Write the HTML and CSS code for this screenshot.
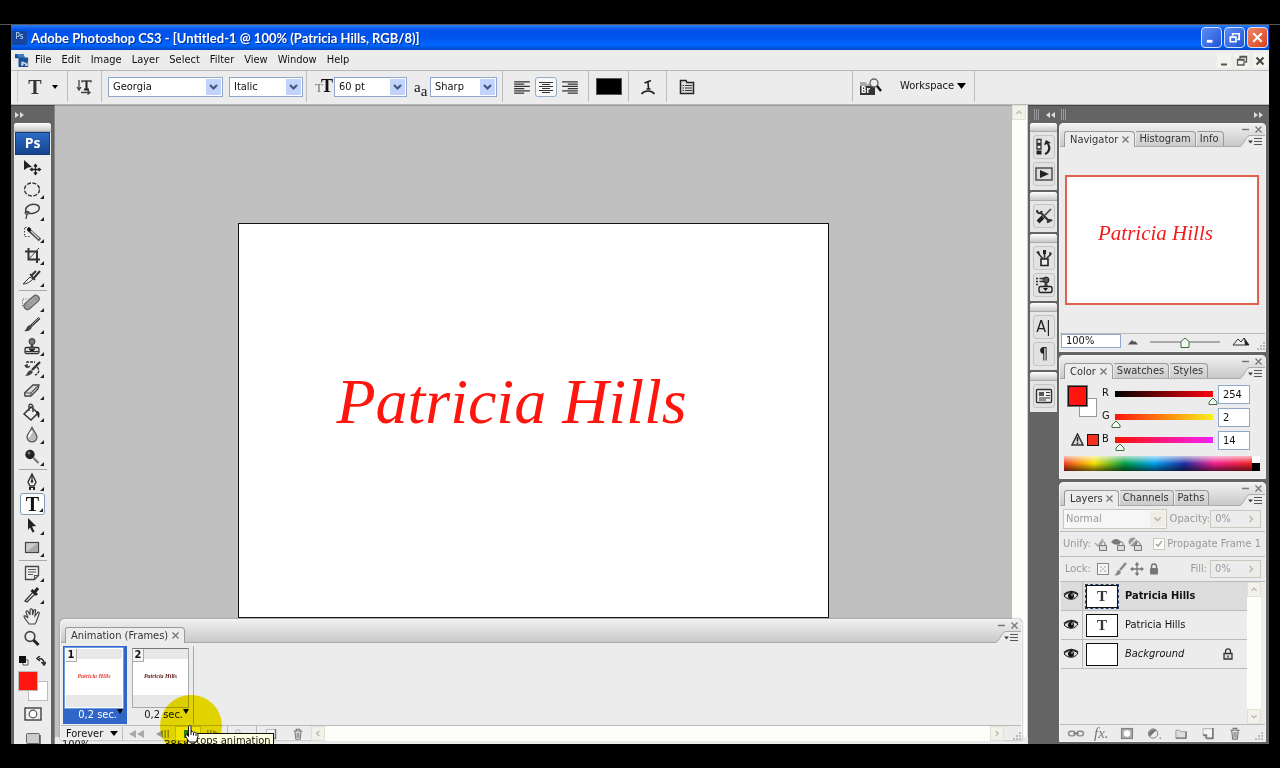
FILE: index.html
```html
<!DOCTYPE html>
<html lang="en">
<head>
    <title>Adobe Photoshop CS3</title>
    <meta charset="UTF-8">
    <link rel="stylesheet" href="styles.css">
</head>
<body>

<!-- shared icons -->
<svg class="sprite" aria-hidden="true">
    <symbol id="chevron" viewBox="0 0 14 16"><path d="M3.500 6l3.500 3.500L10.500 6" fill="none" stroke="#3d5684" stroke-width="2.200"/></symbol>
    <symbol id="minimize" viewBox="0 0 9 9"><path d="M1 4.500h7" stroke="#777" stroke-width="1.500"/></symbol>
    <symbol id="close" viewBox="0 0 9 9"><path d="M1.500 1.500l6 6M7.500 1.500l-6 6" stroke="#777" stroke-width="1.300"/></symbol>
    <symbol id="menu" viewBox="0 0 26 12"><path d="M0 12C5 12 6 1 11 .5h15V12z" fill="#ececec"/><path d="M0 11.500C5 11 6 1 11 .5h15" fill="none" stroke="#aaa"/><path d="M9 5.500h5l-2.500 3z" fill="#444"/><path d="M15 3.500h8M15 6.500h8M15 9.500h8" stroke="#555"/></symbol>
    <symbol id="eye" viewBox="0 0 16 12"><path d="M1 6c3-4 9-5 14-1-3 5-9 6-14 1z" fill="#ddd" stroke="#111"/><path d="M1 4.500C5 .5 11 .5 15 4" fill="none" stroke="#222" stroke-width="1.600"/><circle cx="8" cy="6" r="3" fill="#111"/><circle cx="9" cy="5" r=".8" fill="#fff"/></symbol>
    <symbol id="grip" viewBox="0 0 10 10"><path d="M8 1h2v2H8zM5 4h2v2H5zM8 4h2v2H8zM2 7h2v2H2zM5 7h2v2H5zM8 7h2v2H8z" fill="#bbb"/></symbol>
    <symbol id="trash" viewBox="0 0 12 14"><path d="M1 3.500h10M4 3V1.500h4V3M2.500 4l1 9h5l1-9M5 5.500v6M7 5.500v6" fill="none" stroke="#777" stroke-width="1.200"/></symbol>
    <symbol id="page" viewBox="0 0 12 12"><path d="M1.500 1.500h9v9h-6l-3-3z" fill="#f5f5f5" stroke="#bbb"/><path d="M10.500 1v9.500H4.500M1.500 7.500h3v3" fill="none" stroke="#777" stroke-width="1.500"/></symbol>
    <symbol id="up" viewBox="0 0 14 14"><path d="M4 8.500l3-3 3 3" fill="none" stroke="#bcbcb0" stroke-width="1.600"/></symbol>
    <symbol id="down" viewBox="0 0 14 14"><path d="M4 5.500l3 3 3-3" fill="none" stroke="#bcbcb0" stroke-width="1.600"/></symbol>
    <symbol id="left" viewBox="0 0 14 14"><path d="M8.500 4l-3 3 3 3" fill="none" stroke="#bcbcb0" stroke-width="1.600"/></symbol>
    <symbol id="right" viewBox="0 0 14 14"><path d="M5.500 4l3 3-3 3" fill="none" stroke="#bcbcb0" stroke-width="1.600"/></symbol>
    <symbol id="lock" viewBox="0 0 10 12"><path d="M2.500 6V3.500C2.500 0 7.500 0 7.500 3.500V6" fill="none" stroke="currentColor" stroke-width="1.500"/><rect x="1" y="5" width="8" height="6.500" rx="1" fill="currentColor"/></symbol>
</svg>

<div class="app">
    <header class="title-bar">
        <span class="app-icon">Ps</span>
        <h1>Adobe Photoshop CS3 - [Untitled-1 @ 100% (Patricia Hills, RGB/8)]</h1>
        <button class="win-btn" aria-label="Minimize"><svg viewBox="0 0 16 16"><path d="M3 12h6" stroke="#fff" stroke-width="3"/></svg></button>
        <button class="win-btn" aria-label="Restore"><svg viewBox="0 0 16 16"><path d="M6 6V4h7v6h-2" fill="none" stroke="#fff" stroke-width="1.800"/><path d="M3.500 7.500h6v5h-6z" fill="none" stroke="#fff" stroke-width="1.800"/></svg></button>
        <button class="win-btn win-close" aria-label="Close"><svg viewBox="0 0 16 16"><path d="M3.500 3.500l9 9M12.500 3.500l-9 9" stroke="#fff" stroke-width="2.200"/></svg></button>
    </header>

    <nav class="menu-bar">
        <span class="doc-icon"><svg viewBox="0 0 16 16"><path d="M0 1h10v4h5v11H4V6H0z" fill="#1c4f94"/><path d="M2 1h7l3 4H4z" fill="#3f7fc4"/></svg><b>Ps</b></span>
        <ul>
            <li><a href="#">File</a></li>
            <li><a href="#">Edit</a></li>
            <li><a href="#">Image</a></li>
            <li><a href="#">Layer</a></li>
            <li><a href="#">Select</a></li>
            <li><a href="#">Filter</a></li>
            <li><a href="#">View</a></li>
            <li><a href="#">Window</a></li>
            <li><a href="#">Help</a></li>
        </ul>
        <button class="doc-btn" aria-label="Minimize document"><svg viewBox="0 0 12 12"><path d="M3 9.500h6" stroke="#555" stroke-width="2"/></svg></button>
        <button class="doc-btn" aria-label="Restore document"><svg viewBox="0 0 12 12"><path d="M4 4V1.500h6.500V7H9M1.500 4.500H8V10H1.500zM1.500 5H8M4 2h6.500" fill="none" stroke="#555" stroke-width="1.300"/></svg></button>
        <button class="doc-btn" aria-label="Close document"><svg viewBox="0 0 12 12"><path d="M2.500 2.500l7 7M9.500 2.500l-7 7" stroke="#444" stroke-width="2"/></svg></button>
    </nav>

    <div class="options-bar">
        <div class="opt-cell opt-tool">
            <button class="icon-btn big-t" aria-label="Type tool">T</button>
            <svg class="tri" viewBox="0 0 6 4"><path d="M0 0h6L3 4z"/></svg>
        </div>
        <div class="opt-cell opt-orient">
            <button class="icon-btn" aria-label="Change text orientation"><svg viewBox="0 0 16 16"><path d="M3 1v9M1 8l2 3 2-3M6 3.500V2h9v1.500M5 13.500h8M11.500 11.500l2.500 2-2.500 2" fill="none" stroke="#444" stroke-width="1.300"/><path d="M10.500 2v8.500M8 10.500h5" stroke="#222" stroke-width="2"/></svg></button>
        </div>
        <div class="opt-cell opt-font">
            <div class="combo combo-family"><select aria-label="Font family"><option>Georgia</option></select><svg><use href="#chevron"/></svg></div>
            <div class="combo combo-style"><select aria-label="Font style"><option>Italic</option></select><svg><use href="#chevron"/></svg></div>
        </div>
        <div class="opt-cell opt-size">
            <span class="size-icon"><i>T</i><b>T</b></span>
            <div class="combo combo-size"><select aria-label="Font size"><option>60 pt</option></select><svg><use href="#chevron"/></svg></div>
            <span class="aa-icon">a<sub>a</sub></span>
            <div class="combo combo-aa"><select aria-label="Anti-aliasing"><option>Sharp</option></select><svg><use href="#chevron"/></svg></div>
        </div>
        <div class="opt-cell opt-align">
            <button class="icon-btn" aria-label="Left align"><svg viewBox="0 0 16 16"><path d="M1 2.500h14M1 4.500h9M1 6.500h14M1 8.500h9M1 10.500h14M1 12.500h9" stroke="#333"/></svg></button>
            <button class="icon-btn on" aria-label="Center"><svg viewBox="0 0 16 16"><path d="M1 2.500h14M4 4.500h8M1 6.500h14M4 8.500h8M1 10.500h14M4 12.500h8" stroke="#333"/></svg></button>
            <button class="icon-btn" aria-label="Right align"><svg viewBox="0 0 16 16"><path d="M1 2.500h14M6 4.500h9M1 6.500h14M6 8.500h9M1 10.500h14M6 12.500h9" stroke="#333"/></svg></button>
        </div>
        <div class="opt-cell opt-color"><button class="text-color" aria-label="Text color"></button></div>
        <div class="opt-cell opt-warp">
            <button class="icon-btn" aria-label="Warp text"><svg viewBox="0 0 16 16"><path d="M4.500 4L11 1.500M8 3l.5 7M6.500 10h4M1.500 15c3-4 10-4 13 0" fill="none" stroke="#222" stroke-width="1.600"/></svg></button>
        </div>
        <div class="opt-cell opt-palette">
            <button class="icon-btn" aria-label="Toggle palettes"><svg viewBox="0 0 16 16"><path d="M1.500 1.500H7l1 2h6.500v11h-13z" fill="#ddd" stroke="#222" stroke-width="1.500"/><path d="M3.500 6.500h1.500M6 6.500h7M3.500 9h1.500M6 9h7M3.500 11.500h1.500M6 11.500h7" stroke="#333"/></svg></button>
        </div>
        <div class="opt-cell opt-bridge">
            <span class="bridge"><svg viewBox="0 0 23 18"><path d="M1 4h6l1 2h8v4H1z" fill="#aaa"/><path d="M1 8h15v9H1z" fill="#333"/><circle cx="15" cy="5" r="4" fill="#eee" stroke="#666" stroke-width="1.400"/><path d="M18 8l4 5" stroke="#111" stroke-width="2.400"/></svg><b>Br</b></span>
            <button class="workspace-btn">Workspace <svg viewBox="0 0 9 6"><path d="M0 0h9L4.500 6z"/></svg></button>
        </div>
    </div>

    <div class="workspace">
        <aside class="toolbox">
            <svg class="dbl" viewBox="0 0 10 8"><path d="M0 1l4 3-4 3zM5 1l4 3-4 3z" fill="#ddd"/></svg>
            <div class="tool-panel">
                <div class="strip-head"></div>
                <div class="ps-logo">Ps</div>
                <div class="tools">
                    <button aria-label="Move"><svg viewBox="0 0 22 20"><path d="M3 2l8 7-4 .5L3 12z" fill="#222"/><path d="M14.500 7v9M10 11.500h9M13 8.500l1.500-2 1.500 2M13 14.500l1.500 2 1.500-2M11.500 10l-2 1.500 2 1.500M17.500 10l2 1.500-2 1.500" fill="none" stroke="#222" stroke-width="1.300"/></svg></button>
                    <button class="more" aria-label="Elliptical marquee"><svg viewBox="0 0 22 20"><ellipse cx="11" cy="9.500" rx="7.500" ry="6.500" fill="none" stroke="#333" stroke-width="1.400" stroke-dasharray="4 1.500"/></svg></button>
                    <button class="more" aria-label="Lasso"><svg viewBox="0 0 22 20"><ellipse cx="11.500" cy="7" rx="7" ry="4.500" transform="rotate(-12 11 7)" fill="none" stroke="#444" stroke-width="1.600"/><path d="M5 9c-2 2 0 4 2 3s0-4-2-2M6 12c0 2-1 3-1 5" fill="none" stroke="#444" stroke-width="1.300"/></svg></button>
                    <button class="more" aria-label="Quick selection"><svg viewBox="0 0 22 20"><path d="M4 3.500h6M3.500 4v8M4 12.500h5" stroke="#444" stroke-dasharray="1.500 1.500"/><path d="M8 6l11 10" stroke="#444" stroke-width="3.400"/><path d="M10 7l8 8" stroke="#ccc" stroke-width="1.400"/><circle cx="8" cy="5.500" r="2" fill="#111"/></svg></button>
                    <button class="more" aria-label="Crop"><svg viewBox="0 0 22 20"><path d="M4 5.500h12V17M7.500 2v11.500H19" fill="none" stroke="#333" stroke-width="2"/><path d="M7 14L18 2" stroke="#444"/></svg></button>
                    <button class="more" aria-label="Slice"><svg viewBox="0 0 22 20"><path d="M2 16l7-7 3 2c-3 3-6 5-10 5z" fill="#eee" stroke="#333"/><path d="M10 8l5-5M12 11l7-8" stroke="#333" stroke-width="2"/><path d="M9 6l5 6" stroke="#333" stroke-width="1.500"/></svg></button>
                    <hr>
                    <button class="more" aria-label="Healing brush"><svg viewBox="0 0 22 20"><rect x="1.500" y="5.500" width="18" height="7" rx="3.500" transform="rotate(-42 11 9)" fill="#999" stroke="#555"/><path d="M9 7l5 5M7 9l5 5M11 6l4 4" stroke="#ccc" stroke-dasharray="1 1.500"/><path d="M1.500 13V6h6" fill="none" stroke="#555" stroke-dasharray="1 1.500"/></svg></button>
                    <button class="more" aria-label="Brush"><svg viewBox="0 0 22 20"><path d="M18.500 3L10 11" stroke="#333" stroke-width="2.600"/><path d="M18 3l-7 7" stroke="#bbb" stroke-width=".8"/><path d="M3 16c3-1 2-5 6-6l2 2c-1 3-4 5-8 4z" fill="#444"/></svg></button>
                    <button class="more" aria-label="Clone stamp"><svg viewBox="0 0 22 20"><circle cx="11" cy="4.500" r="3" fill="#777" stroke="#333"/><path d="M11 7v5" stroke="#444" stroke-width="2.500"/><rect x="4" y="10.500" width="14" height="6" rx="1.500" fill="#ddd" stroke="#333" stroke-width="1.300"/><path d="M8 12h6l-3 3zM4 14.500h14" fill="#222" stroke="#333"/></svg></button>
                    <button class="more" aria-label="History brush"><svg viewBox="0 0 22 20"><path d="M19 3l-8 8" stroke="#333" stroke-width="2.400"/><path d="M4 17c2-1 2-5 6-6l2 2c-2 3-5 4-8 4z" fill="#444"/><path d="M6 8V3h8M4 6l2 3 3-2M16 8c3 3 2 7-2 8" fill="none" stroke="#333" stroke-width="1.400" stroke-dasharray="3 1"/></svg></button>
                    <button class="more" aria-label="Eraser"><svg viewBox="0 0 22 20"><path d="M3.500 12L12 4h6l-1 4-7 7H4z" fill="#ddd" stroke="#444" stroke-width="1.300"/><path d="M4 12h6l8-8M10 12v3" fill="none" stroke="#555" stroke-width="1.200"/></svg></button>
                    <button class="more" aria-label="Paint bucket"><svg viewBox="0 0 22 20"><path d="M3 11l7-7 7 6-7 7z" fill="#eee" stroke="#333" stroke-width="1.500"/><path d="M8 8V3c0-3 4-2 4 1v5" fill="none" stroke="#444" stroke-width="1.500"/><path d="M15 8c4 0 4 3 3 7-2-1-1-4-3-5z" fill="#222"/></svg></button>
                    <button class="more" aria-label="Blur"><svg viewBox="0 0 22 20"><path d="M11 2c1 4 5 7 5 10a5 5 0 0 1-10 0c0-3 4-6 5-10z" fill="#bbb" stroke="#555" stroke-width="1.200"/><path d="M8 12c0-2 2-4 3-6" stroke="#fff" fill="none" stroke-width="2"/></svg></button>
                    <button class="more" aria-label="Dodge"><svg viewBox="0 0 22 20"><circle cx="9" cy="7.500" r="4.700" fill="#222"/><circle cx="8" cy="6" r="1.500" fill="#777"/><path d="M12.500 11l5 5" stroke="#777" stroke-width="2.200"/></svg></button>
                    <hr>
                    <button class="more" aria-label="Pen"><svg viewBox="0 0 22 20"><path d="M11 2l4 8-2 4H9l-2-4z" fill="#eee" stroke="#333" stroke-width="1.400"/><path d="M11 3v6" stroke="#222" stroke-width="1.200"/><path d="M8 15h6v3h-2v-2h-2v2H8z" fill="#222"/><circle cx="11" cy="9.500" r="1.300" fill="#222"/></svg></button>
                    <button class="more on big-t" aria-label="Horizontal type">T</button>
                    <button class="more" aria-label="Path selection"><svg viewBox="0 0 22 20"><path d="M7 2l8 8-4 .5 2.500 5-2 1-2.500-5L7 14z" fill="#222"/></svg></button>
                    <button class="more" aria-label="Rectangle"><svg viewBox="0 0 22 20"><rect x="4.500" y="4.500" width="13" height="10" fill="#ccc" stroke="#444" stroke-width="1.200"/><path d="M5 14L17 5v9z" fill="#aaa"/></svg></button>
                    <hr>
                    <button class="more" aria-label="Notes"><svg viewBox="0 0 22 20"><path d="M4.500 3.500h13v9l-4 4h-9z" fill="#eee" stroke="#444" stroke-width="1.300"/><path d="M7 6.500h8M7 9h8M7 11.500h5M17.500 12.500h-4v4" fill="none" stroke="#555" stroke-width="1.200"/></svg></button>
                    <button class="more" aria-label="Eyedropper"><svg viewBox="0 0 22 20"><path d="M4 16l8-9 2 2-8 8z" fill="#eee" stroke="#333" stroke-width="1.200"/><path d="M10.500 5l5.500 5M13 8l4-5" stroke="#222" stroke-width="3"/></svg></button>
                    <button aria-label="Hand"><svg viewBox="0 0 22 20"><path d="M8 17c-2-3-5-6-5-8 2-1 3 1 4 2L5 5c1-2 2-1 3 1l1 2V3c1-2 2-1 2.500 0v5l1.500-5c1.500-1 2 0 1.500 1.500L14 9l3-4c1.500 0 1.500 1 1 2-1 3-2 7-4 10z" fill="#eee" stroke="#444" stroke-width="1.200"/></svg></button>
                    <button aria-label="Zoom"><svg viewBox="0 0 22 20"><circle cx="9" cy="7.500" r="4.800" fill="#eee" stroke="#444" stroke-width="1.700"/><path d="M12.500 11l5 5" stroke="#222" stroke-width="3"/></svg></button>
                </div>
                <div class="mini-row">
                    <svg viewBox="0 0 10 10"><path d="M4 4h5v5H4z" fill="#fff" stroke="#555"/><path d="M0 0h7v7H0z" fill="#111"/></svg>
                    <svg viewBox="0 0 10 10"><path d="M3 2.500c3 0 5 1 5 5M4 0L1 2.500 4 5M5.500 6L8 9l2-3" fill="none" stroke="#333" stroke-width="1.600"/></svg>
                </div>
                <div class="swatches"><button class="fg" aria-label="Foreground color"></button><button class="bg" aria-label="Background color"></button></div>
                <button class="mode-btn" aria-label="Quick mask"><svg viewBox="0 0 18 14"><rect x="1" y="1" width="16" height="12" fill="#eee" stroke="#333" stroke-width="1.300"/><circle cx="9" cy="7" r="3.800" fill="#fff" stroke="#555" stroke-width="1.200"/></svg></button>
                <button class="mode-btn" aria-label="Screen mode"><svg viewBox="0 0 18 14"><rect x="2.500" y="1.500" width="13" height="10" rx="1" fill="#ccc" stroke="#666"/><path d="M16 3v10H4" fill="none" stroke="#555" stroke-width="1.500"/></svg></button>
            </div>
        </aside>

        <main class="document">
            <div class="stage">
                <div class="canvas">Patricia Hills</div>
            </div>
            <div class="v-scroll"><button aria-label="Scroll up"><svg><use href="#up"/></svg></button></div>
            <div class="status-bar"><span>100%</span><span>386K</span></div>

            <section class="panel animation">
                <div class="panel-head">
                    <div class="tabs"><button class="tab active">Animation (Frames)<svg><use href="#close"/></svg></button></div>
                    <div class="head-tools">
                        <span><svg><use href="#minimize"/></svg><svg><use href="#close"/></svg></span>
                        <svg class="menu-icon"><use href="#menu"/></svg>
                    </div>
                </div>
                <div class="frames">
                    <div class="frame active">
                        <div class="frame-thumb"><b>1</b><p>Patricia Hills</p></div>
                        <span>0,2 sec.<svg viewBox="0 0 6 6"><path d="M0 0h6L3 5z"/></svg></span>
                    </div>
                    <div class="frame">
                        <div class="frame-thumb"><b>2</b><p>Patricia Hills</p></div>
                        <span>0,2 sec.<svg viewBox="0 0 6 6"><path d="M0 0h6L3 5z"/></svg></span>
                    </div>
                </div>
                <div class="anim-foot">
                    <button class="loop">Forever <svg viewBox="0 0 8 6"><path d="M0 0h8L4 5z"/></svg></button>
                    <button class="play-btn" aria-label="First frame"><svg viewBox="0 0 18 12"><path d="M9 2v8L2 6zM17 2v8l-7-4z" fill="#aaa"/></svg></button>
                    <button class="play-btn" aria-label="Previous frame"><svg viewBox="0 0 18 12"><path d="M10 2v8L3 6zM11.500 2h1.500v8h-1.500zM14.500 2H16v8h-1.500z" fill="#999"/></svg></button>
                    <button class="play-btn on" aria-label="Stop"><svg viewBox="0 0 18 12"><rect x="5" y="2" width="8" height="8" fill="#2c8a2c"/></svg></button>
                    <button class="play-btn" aria-label="Next frame"><svg viewBox="0 0 18 12"><path d="M8 2v8l7-4zM2 2h1.500v8H2zM5 2h1.500v8H5z" fill="#999"/></svg></button>
                    <button class="play-btn wide" aria-label="Tween"><svg viewBox="0 0 18 12"><circle cx="5" cy="3.500" r="2" fill="none" stroke="#bbb"/><circle cx="9" cy="7" r="2" fill="none" stroke="#bbb"/><path d="M12 9h1.500M14.500 9h1.500" stroke="#999"/></svg></button>
                    <button class="play-btn wide" aria-label="Duplicate frame"><svg><use href="#page"/></svg></button>
                    <button class="play-btn" aria-label="Delete frame"><svg><use href="#trash"/></svg></button>
                    <div class="h-scroll">
                        <button aria-label="Scroll left"><svg><use href="#left"/></svg></button>
                        <button aria-label="Scroll right"><svg><use href="#right"/></svg></button>
                    </div>
                    <svg class="grip"><use href="#grip"/></svg>
                </div>
            </section>

            <div class="click-spot"></div>
            <div class="tooltip">Stops animation</div>
            <svg class="cursor" viewBox="0 0 14 18"><path d="M4 17c-1-3-4-5-3.500-7C2 9 3 11 3.500 11.500V2c0-2 2.500-2 2.500 0v5c1-1 2-.5 2.500.5 1-.7 2-.3 2.300.8 1.200-.6 2.200.2 2.200 1.500 0 3-1 4-1.500 7.200z" fill="#fff" stroke="#111"/><path d="M6 7v3M8.500 8v2.500M11 9v2" stroke="#111"/></svg>
        </main>

        <aside class="dock">
            <div class="dock-top">
                <svg class="bars" viewBox="0 0 7 11"><path d="M.5 0v11M2.500 0v11M4.500 0v11" stroke="#999"/></svg>
                <svg class="dbl" viewBox="0 0 10 8"><path d="M4 1L0 4l4 3zM9 1L5 4l4 3z" fill="#ddd"/></svg>
                <svg class="bars" viewBox="0 0 7 11"><path d="M.5 0v11M2.500 0v11M4.500 0v11" stroke="#999"/></svg>
                <svg class="dbl last" viewBox="0 0 10 8"><path d="M0 1l4 3-4 3zM5 1l4 3-4 3z" fill="#ddd"/></svg>
            </div>
            <div class="dock-body">
                <div class="icon-strip">
                    <div class="strip-group">
                        <div class="strip-head"></div>
                        <button aria-label="History"><svg viewBox="0 0 18 18"><path d="M2 1.500h4v4H2zM2 7h4v4H2z" fill="#eee" stroke="#333" stroke-width="1.300"/><path d="M1.500 12.500h5v4h-5z" fill="#222"/><path d="M10 16c5-2 5-7 3-10" fill="none" stroke="#222" stroke-width="2.200"/><path d="M9 7l2-5 5 3z" fill="#222"/></svg></button>
                        <button aria-label="Actions"><svg viewBox="0 0 18 18"><rect x="1" y="3" width="16" height="12" fill="#ddd" stroke="#444" stroke-width="1.400"/><path d="M5 5l9 4-9 4z" fill="#222"/></svg></button>
                    </div>
                    <div class="strip-group">
                        <div class="strip-head"></div>
                        <button aria-label="Tool presets"><svg viewBox="0 0 18 18"><path d="M5 5l10 10" stroke="#333" stroke-width="2.200"/><path d="M2 3c0 4 4 4 5 1M13 16c-1-3 2-4 4-2" fill="none" stroke="#333" stroke-width="2"/><path d="M16 2l-7 7" stroke="#444" stroke-width="1.600"/><path d="M8 10l-5 5" stroke="#222" stroke-width="4"/></svg></button>
                    </div>
                    <div class="strip-group">
                        <div class="strip-head"></div>
                        <button aria-label="Brushes"><svg viewBox="0 0 18 18"><path d="M6 10h7v6.500H6z" fill="#eee" stroke="#222" stroke-width="1.600"/><path d="M8 10L3 4M9.500 10V2M11 10l5-5" stroke="#333" stroke-width="1.600"/><path d="M1 3l3-1 1 4zM8 1h3v4H8zM14 3l3 1-2 3z" fill="#222"/></svg></button>
                        <button aria-label="Clone source"><svg viewBox="0 0 18 18"><path d="M1 2.500h2M4.500 2.500H9M1 5.500h2M4.500 5.500H8M1 8.500h2" stroke="#333" stroke-width="1.400"/><path d="M9 10.500h4l-1-4H10z" fill="#444"/><circle cx="11" cy="4" r="3" fill="#555" stroke="#222"/><rect x="4" y="10.500" width="13" height="6" rx="1.500" fill="#ddd" stroke="#222" stroke-width="1.400"/><path d="M8 12h5l-2.500 3z" fill="#111"/></svg></button>
                    </div>
                    <div class="strip-group">
                        <div class="strip-head"></div>
                        <button class="char" aria-label="Character">A|</button>
                        <button class="char" aria-label="Paragraph">¶</button>
                    </div>
                    <div class="strip-group">
                        <div class="strip-head"></div>
                        <button aria-label="Layer comps"><svg viewBox="0 0 18 18"><rect x="1.500" y="2.500" width="15" height="13" rx="1" fill="#eee" stroke="#333" stroke-width="1.400"/><path d="M4 5h5v4H4z" fill="#555"/><path d="M11 5.500h4M11 8.500h4M4 11h11M4 13h7" stroke="#333"/></svg></button>
                    </div>
                </div>

                <div class="panels">
                    <section class="panel navigator">
                        <div class="panel-head">
                            <div class="tabs">
                                <button class="tab active">Navigator<svg><use href="#close"/></svg></button>
                                <button class="tab">Histogram</button>
                                <button class="tab">Info</button>
                            </div>
                            <div class="head-tools">
                                <span><svg><use href="#minimize"/></svg><svg><use href="#close"/></svg></span>
                                <svg class="menu-icon"><use href="#menu"/></svg>
                            </div>
                        </div>
                        <div class="nav-body"><div class="nav-view">Patricia Hills</div></div>
                        <div class="nav-foot">
                            <input type="text" value="100%" aria-label="Zoom level">
                            <svg viewBox="0 0 10 7"><path d="M0 6.500L4 2l2 2 1-1 3 3.500z" fill="#555"/></svg>
                            <input type="range" class="zoom-range" aria-label="Zoom" value="50">
                            <svg class="far" viewBox="0 0 18 9"><path d="M1 8l5-6 3 3 3-4 5 7z" fill="#eee" stroke="#333"/><path d="M12 1l5 7h-4z" fill="#222"/></svg>
                            <svg class="grip"><use href="#grip"/></svg>
                        </div>
                    </section>

                    <section class="panel color">
                        <div class="panel-head">
                            <div class="tabs">
                                <button class="tab active">Color<svg><use href="#close"/></svg></button>
                                <button class="tab">Swatches</button>
                                <button class="tab">Styles</button>
                            </div>
                            <div class="head-tools">
                                <span><svg><use href="#minimize"/></svg><svg><use href="#close"/></svg></span>
                                <svg class="menu-icon"><use href="#menu"/></svg>
                            </div>
                        </div>
                        <div class="color-body">
                            <div class="color-left">
                                <div class="color-pair"><span class="pair-fg"></span><span class="pair-bg"></span></div>
                                <div class="gamut"><svg viewBox="0 0 13 13"><path d="M6.500 1L12 12H1z" fill="#ddd" stroke="#333" stroke-width="1.500"/><path d="M6.500 4v4.500M6.500 9.500v1.500" stroke="#222" stroke-width="1.600"/></svg><span></span></div>
                            </div>
                            <div class="channels">
                                <div class="channel"><label for="red">R</label><input type="range" id="red" class="rgb red" max="255" value="254"><input type="text" value="254" aria-label="Red value"></div>
                                <div class="channel"><label for="green">G</label><input type="range" id="green" class="rgb green" max="255" value="2"><input type="text" value="2" aria-label="Green value"></div>
                                <div class="channel"><label for="blue">B</label><input type="range" id="blue" class="rgb blue" max="255" value="14"><input type="text" value="14" aria-label="Blue value"></div>
                            </div>
                        </div>
                        <div class="spectrum"><div class="ramp"></div><div class="bw"></div></div>
                    </section>

                    <section class="panel layers">
                        <div class="panel-head">
                            <div class="tabs">
                                <button class="tab active tight">Layers<svg><use href="#close"/></svg></button>
                                <button class="tab">Channels</button>
                                <button class="tab">Paths</button>
                            </div>
                            <div class="head-tools">
                                <span><svg><use href="#minimize"/></svg><svg><use href="#close"/></svg></span>
                                <svg class="menu-icon"><use href="#menu"/></svg>
                            </div>
                        </div>
                        <div class="layer-row">
                            <div class="combo combo-blend"><select aria-label="Blend mode" disabled><option>Normal</option></select><svg><use href="#down"/></svg></div>
                            <label for="opacity">Opacity:</label>
                            <span class="percent"><input type="text" id="opacity" value="0%" disabled><svg><use href="#right"/></svg></span>
                        </div>
                        <div class="layer-row">
                            <span>Unify:</span>
                            <svg class="unify" viewBox="0 0 14 14"><path d="M1 6l3 3 5-7" fill="none" stroke="#aaa" stroke-width="1.500"/><path d="M7 8.500V7c0-3 4-3 4 0v1.500" fill="none" stroke="#777"/><path d="M5.500 8.500h7v5h-7z" fill="#ddd" stroke="#777"/></svg>
                            <svg class="unify" viewBox="0 0 14 14"><path d="M0 5c3-4 7-4 10 0-3 4-7 3-10 0z" fill="#777"/><path d="M8 8.500V7c0-3 4-3 4 0v1.500" fill="none" stroke="#777"/><path d="M6.500 8.500h7v5h-7z" fill="#ddd" stroke="#777"/></svg>
                            <svg class="unify" viewBox="0 0 14 14"><circle cx="5" cy="5" r="4.500" fill="#999"/><path d="M2 8l7-7" stroke="#eee" stroke-width="1.500"/><path d="M8 8.500V7c0-3 4-3 4 0v1.500" fill="none" stroke="#777"/><path d="M6.500 8.500h7v5h-7z" fill="#ddd" stroke="#777"/></svg>
                            <label class="propagate"><input type="checkbox" checked disabled>Propagate Frame 1</label>
                        </div>
                        <div class="layer-row">
                            <span class="lock-label">Lock:</span>
                            <svg class="unify" viewBox="0 0 14 14"><rect x="1.500" y="1.500" width="11" height="11" fill="#f5f5f5" stroke="#888"/><path d="M4 4h2v2H4zM8 4h2v2H8zM6 6h2v2H6zM4 8h2v2H4zM8 8h2v2H8z" fill="#ccc"/></svg>
                            <svg class="unify" viewBox="0 0 14 14"><path d="M13 1L7 8" stroke="#888" stroke-width="2.400"/><path d="M1 13c3 0 2-5 5-5l2 2c-1 3-4 4-7 3z" fill="#888"/></svg>
                            <svg class="unify" viewBox="0 0 14 14"><path d="M7 1v12M1 7h12M5.500 3L7 1l1.500 2M5.500 11L7 13l1.500-2M3 5.500L1 7l2 1.500M11 5.500L13 7l-2 1.500" fill="none" stroke="#777" stroke-width="1.300"/></svg>
                            <svg class="unify gray"><use href="#lock"/></svg>
                            <label for="fill" class="fill-label">Fill:</label>
                            <span class="percent"><input type="text" id="fill" value="0%" disabled><svg><use href="#right"/></svg></span>
                        </div>
                        <div class="layer-area">
                            <ul class="layer-list">
                                <li class="selected"><span class="eye"><svg><use href="#eye"/></svg></span><span class="thumb">T</span><b>Patricia Hills</b></li>
                                <li><span class="eye"><svg><use href="#eye"/></svg></span><span class="thumb">T</span>Patricia Hills</li>
                                <li><span class="eye"><svg><use href="#eye"/></svg></span><span class="thumb"></span><i>Background</i><svg class="bg-lock" viewBox="0 0 10 12"><path d="M2.500 6V3.500C2.500 0 7.500 0 7.500 3.500V6" fill="none" stroke="#333" stroke-width="1.300"/><path d="M1 5.500h8v5.500H1zM5 7.500v2" fill="#ddd" stroke="#333" stroke-width="1.300"/></svg></li>
                            </ul>
                            <div class="list-scroll">
                                <button aria-label="Scroll layers up"><svg><use href="#up"/></svg></button>
                                <button aria-label="Scroll layers down"><svg><use href="#down"/></svg></button>
                            </div>
                        </div>
                        <div class="layer-foot">
                            <svg viewBox="0 0 18 14"><rect x="1" y="4.500" width="7" height="5" rx="2.500" fill="none" stroke="#888" stroke-width="1.500"/><rect x="10" y="4.500" width="7" height="5" rx="2.500" fill="none" stroke="#888" stroke-width="1.500"/><path d="M6 7h6" stroke="#777" stroke-width="1.500"/></svg>
                            <span class="fx">fx.</span>
                            <svg viewBox="0 0 18 14"><rect x="3" y="1.500" width="12" height="11" fill="#aaa" stroke="#777"/><circle cx="9" cy="7" r="3.500" fill="#fff"/></svg>
                            <svg viewBox="0 0 18 14"><circle cx="8" cy="7" r="5" fill="#eee" stroke="#777"/><path d="M4.500 10.500l7-7a5 5 0 0 0-7 7z" fill="#777"/><path d="M15 12h1.500" stroke="#777" stroke-width="1.500"/></svg>
                            <svg viewBox="0 0 18 14"><path d="M3.500 3.500h4l1 1.500h6v7h-11z" fill="#ddd" stroke="#999"/><path d="M14.500 5v7h-11" fill="none" stroke="#777" stroke-width="1.500"/></svg>
                            <svg><use href="#page"/></svg>
                            <svg><use href="#trash"/></svg>
                            <svg class="grip"><use href="#grip"/></svg>
                        </div>
                    </section>
                </div>
            </div>
        </aside>
    </div>
</div>

</body>
</html>
```

FILE: styles.css
```css
* {
    box-sizing: border-box;
}

html {
    background: black;
}

body {
    margin: 24px 0;
    padding: 0 11px;
    border-top: 1px solid #555;
    font-family: "DejaVu Sans Condensed", "Liberation Sans", sans-serif;
    font-size: 11px;
    line-height: 14px;
    color: #111;
    background: black;
}

button, input, select {
    font: inherit;
    color: inherit;
    margin: 0;
}

button {
    padding: 0;
    border: none;
    background: none;
}

ul {
    list-style: none;
    margin: 0;
    padding: 0;
}

a {
    color: inherit;
    text-decoration: none;
}

svg {
    display: block;
    flex-shrink: 0;
}

.sprite {
    position: absolute;
    width: 0;
    height: 0;
}

.app {
    display: flex;
    flex-direction: column;
    height: calc(100vh - 49px);
    overflow: hidden;
    background: #ececec;
}

/* title bar */

.title-bar {
    display: flex;
    align-items: center;
    gap: 2px;
    height: 25px;
    flex-shrink: 0;
    padding: 0 1px;
    background: linear-gradient(#2a7df5, #0052ea 20%, #0054ee 50%, #0066ff 80%, #0048c8);
}

.app-icon {
    width: 15px;
    height: 14px;
    background: #15489c;
    color: #cfe4ff;
    font-size: 8px;
    line-height: 12px;
    text-align: center;
}

.title-bar h1 {
    flex: 1;
    margin: 0 0 0 2px;
    font-family: Lato, "Open Sans", sans-serif;
    font-size: 13px;
    font-weight: bold;
    line-height: 20px;
    white-space: nowrap;
    color: white;
    text-shadow: 1px 1px #0a2f8c;
}

.win-btn {
    width: 21px;
    height: 21px;
    padding: 2px;
    border: 1px solid #d5e2ff;
    border-radius: 4px;
    background: linear-gradient(135deg, #5d8df5, #1f55d6);
}

.win-close {
    background: linear-gradient(135deg, #f08a68, #d8401a);
}

/* menu bar */

.menu-bar {
    display: flex;
    align-items: center;
    gap: 6px;
    height: 21px;
    flex-shrink: 0;
    padding: 0 2px 0 4px;
    border-bottom: 1px solid #b8b8b8;
}

.doc-icon {
    position: relative;
    width: 14px;
}

.doc-icon b {
    position: absolute;
    right: 1px;
    bottom: 0;
    font-size: 6px;
    line-height: 7px;
    color: white;
}

.menu-bar ul {
    display: flex;
    flex: 1;
    gap: 10px;
}

.doc-btn {
    width: 14px;
    height: 15px;
    padding: 2px 1px;
    background: #f4f4ee;
}

.doc-btn:nth-last-child(-n+2) {
    margin-left: -2px;
}

/* options bar */

.options-bar {
    display: flex;
    height: 34px;
    flex-shrink: 0;
    padding: 0 0 2px 6px;
    border-bottom: 1px solid #b8b8b8;
}

.opt-cell {
    display: flex;
    align-items: center;
    border-right: 1px solid #bbb;
}

.opt-tool {
    width: 51px;
    padding-left: 8px;
    gap: 8px;
    border-left: 1px solid #ccc;
}

.big-t {
    font-family: "Liberation Serif", serif;
    font-size: 20px;
    font-weight: bold;
    line-height: 20px;
}

.tri {
    width: 6px;
    height: 4px;
}

.icon-btn {
    width: 18px;
    height: 20px;
    padding: 2px 1px;
}

.icon-btn.big-t {
    padding: 0;
    color: #333;
}

.opt-orient {
    width: 34px;
    padding-left: 7px;
}

.opt-font {
    width: 205px;
    padding-left: 6px;
    gap: 6px;
}

.combo {
    display: grid;
    height: 20px;
    border: 1px solid #8ea9c9;
    background: white;
}

.combo select, .combo svg {
    grid-area: 1 / 1;
}

.combo select {
    width: 100%;
    padding: 0 18px 0 4px;
    border: none;
    outline: none;
    background: none;
    appearance: none;
}

.combo svg {
    justify-self: end;
    width: 15px;
    height: 16px;
    margin: 1px;
    background: #c3d3fb;
    pointer-events: none;
}

.combo-family { width: 115px; }
.combo-style { width: 74px; }
.combo-size { width: 73px; }
.combo-aa { width: 67px; }

.opt-size {
    width: 196px;
    padding-left: 8px;
}

.size-icon {
    width: 19px;
    font-family: "Liberation Serif", serif;
    font-size: 18px;
    line-height: 20px;
    white-space: nowrap;
}

.size-icon i {
    font-size: 13px;
    font-style: normal;
    color: #777;
}

.size-icon b {
    margin-left: -2px;
}

.aa-icon {
    width: 23px;
    padding-left: 7px;
    font-family: "Liberation Serif", serif;
    font-size: 15px;
    white-space: nowrap;
}

.aa-icon sub {
    font-size: 15px;
    line-height: 0;
}

.opt-align {
    width: 86px;
    padding-left: 8px;
    gap: 2px;
}

.opt-align .icon-btn {
    width: 22px;
    height: 20px;
    padding: 2px;
}

.icon-btn.on {
    border: 1px solid #93acc8;
    border-radius: 3px;
    background: #f8f8f8;
}

.opt-color {
    width: 40px;
    padding-left: 7px;
}

.text-color {
    width: 26px;
    height: 17px;
    border: 1px solid #555;
    background: black;
}

.opt-warp {
    width: 38px;
    padding-left: 10px;
}

.opt-palette {
    flex: 0 1 186px;
    padding-left: 11px;
}

.opt-bridge {
    width: 122px;
    padding-left: 6px;
    gap: 18px;
}

.bridge {
    position: relative;
    width: 23px;
}

.bridge b {
    position: absolute;
    left: 2px;
    bottom: 1px;
    font-size: 8px;
    line-height: 8px;
    color: white;
}

.workspace-btn {
    display: flex;
    align-items: center;
    gap: 3px;
    padding-bottom: 2px;
}

.workspace-btn svg {
    width: 9px;
    height: 6px;
}

/* workspace */

.workspace {
    display: flex;
    flex: 1;
    min-height: 0;
}

.toolbox {
    width: 44px;
    flex-shrink: 0;
    padding: 0 3px;
    border-top: 1px solid #444;
    border-right: 1px solid #888;
    background: #646464;
}

.dbl {
    width: 10px;
    height: 8px;
}

.toolbox .dbl {
    margin: 5px 1px 4px;
}

.tool-panel {
    height: 640px;
    border-radius: 3px 3px 0 0;
    background: #ececec;
    overflow: hidden;
}

.strip-head {
    height: 9px;
    background: linear-gradient(#fff, #c8c8c8);
    border-bottom: 1px solid #aaa;
}

.ps-logo {
    height: 23px;
    margin: 0 1px 2px;
    border: 1px solid #123b78;
    background: linear-gradient(#2d6cc4, #14438c);
    color: white;
    font-family: "Open Sans", sans-serif;
    font-size: 14px;
    font-weight: bold;
    line-height: 20px;
    text-align: center;
}

.tools {
    display: flex;
    flex-direction: column;
    align-items: center;
}

.tools button {
    position: relative;
    width: 25px;
    height: 22px;
    padding: 1px;
}

.tools svg {
    width: 22px;
    height: 20px;
}

.tools .more::after {
    content: "";
    position: absolute;
    right: 1px;
    bottom: 2px;
    border-left: 4px solid transparent;
    border-bottom: 4px solid #222;
}

.tools .on {
    border: 1px solid #7f9dbb;
    border-radius: 3px;
    background: white;
    line-height: 18px;
}

.tools hr {
    width: 28px;
    height: 1px;
    margin: 1px 0;
    border: none;
    background: #aaa;
}

.mini-row {
    display: flex;
    justify-content: space-between;
    padding: 6px 5px 5px;
}

.mini-row svg {
    width: 10px;
    height: 10px;
}

.swatches {
    display: grid;
    grid-template-columns: repeat(3, 10px);
    grid-template-rows: repeat(3, 10px);
    margin: 0 0 4px 4px;
}

.swatches button {
    border: 1px solid #bbb;
}

.swatches .fg {
    grid-area: 1 / 1 / 3 / 3;
    z-index: 1;
    background: #fe160e;
}

.swatches .bg {
    grid-area: 2 / 2 / 4 / 4;
    background: white;
}

.mode-btn {
    display: block;
    width: 18px;
    height: 18px;
    margin: 0 auto 7px;
}

/* document window */

.document {
    position: relative;
    display: grid;
    grid-template-columns: 1fr 16px;
    grid-template-rows: 1fr 7px;
    flex: 1;
    min-width: 0;
    background: #c0c0c0;
}

.stage {
    padding: 117px 183px 0;
    border-top: 1px solid #999;
}

.canvas {
    height: 395px;
    padding: 138px 44px 0 0;
    border: 1px solid #111;
    background: white;
    color: #fe160e;
    font-family: Georgia, "Liberation Serif", serif;
    font-size: 64px;
    font-style: italic;
    line-height: 80px;
    text-align: center;
    white-space: nowrap;
}

.v-scroll {
    background: #fdfdfa;
    border-right: 1px solid #ccc;
}

.v-scroll button, .h-scroll button, .list-scroll button {
    display: block;
    width: 14px;
    height: 15px;
    border: 1px solid #e0e0d4;
    background: #f2f2ea;
}

.v-scroll svg, .h-scroll svg, .list-scroll svg {
    width: 12px;
    height: 13px;
}

.status-bar {
    display: flex;
    grid-column: 1 / 3;
    gap: 74px;
    padding: 1px 7px 0;
    background: #ececec;
    overflow: hidden;
}

/* panels */

.panel {
    display: flex;
    flex-direction: column;
    border: 1px solid #f4f4f4;
    border-radius: 4px 4px 0 0;
    background: #ececec;
}

.panel-head {
    display: flex;
    justify-content: space-between;
    height: 23px;
    flex-shrink: 0;
    border-bottom: 1px solid #aaa;
    border-radius: 3px 3px 0 0;
    background: linear-gradient(#f0f0f0, #c9c9c9);
}

.tabs {
    display: flex;
    align-items: flex-end;
    padding-left: 4px;
}

.tab {
    display: flex;
    align-items: center;
    gap: 3px;
    height: 15px;
    padding: 0 4px 0 3px;
    border: 1px solid #999;
    border-bottom: none;
    border-left-color: #eee;
    border-radius: 3px 4px 0 0;
    background: linear-gradient(#e2e2e2, #cbcbcb);
    color: #333;
    white-space: nowrap;
}

.tab.active {
    height: 16px;
    margin-bottom: -1px;
    padding-left: 5px;
    border-left-color: #999;
    background: #ececec;
}

.tab.tight {
    gap: 2px;
}

.tab svg, .head-tools span svg {
    width: 9px;
    height: 9px;
}

.head-tools {
    display: flex;
    flex-direction: column;
    align-items: flex-end;
    justify-content: space-between;
    padding-top: 1px;
}

.head-tools span {
    display: flex;
    gap: 4px;
    padding-right: 2px;
}

.head-tools .menu-icon {
    width: 26px;
    height: 12px;
    margin-bottom: -1px;
}

/* animation panel floats over the canvas */

.animation {
    position: absolute;
    left: 5px;
    right: 6px;
    bottom: 4px;
    height: 121px;
    box-shadow: 0 0 2px #777;
}

.frames {
    display: flex;
    flex: 1;
    gap: 3px;
    padding: 3px 0 1px 2px;
}

.frame {
    width: 64px;
    padding: 2px;
    border-right: 1px solid #aaa;
}

.frame.active {
    border: none;
    background: #2f66c8;
    color: white;
}

.frame-thumb {
    height: 60px;
    margin-right: 2px;
    border: 1px solid #aaa;
    border-top-color: #777;
    background: linear-gradient(#e8e8e8 10px, white 10px, white 46px, #e8e8e8 46px);
}

.active .frame-thumb {
    border-color: white;
    outline: 1px solid #6f9ae4;
}

.frame-thumb b {
    display: block;
    width: 11px;
    height: 13px;
    background: #f4f4f4;
    color: #111;
    text-align: center;
    border-right: 1px solid #aaa;
    border-bottom: 1px solid #aaa;
    line-height: 12px;
}

.frame-thumb p {
    margin: 8px 0 0;
    font-family: Georgia, "Liberation Serif", serif;
    font-size: 6px;
    font-style: italic;
    font-weight: bold;
    line-height: 12px;
    text-align: center;
    color: #5a1510;
}

.active .frame-thumb p {
    color: #e8403c;
}

.frame > span {
    display: flex;
    justify-content: flex-end;
    padding-right: 2px;
}

.frame > span svg {
    width: 6px;
    height: 8px;
    color: #111;
}

.anim-foot {
    display: flex;
    align-items: center;
    height: 16px;
    flex-shrink: 0;
    border-top: 1px solid #bbb;
}

.loop {
    display: flex;
    align-items: center;
    justify-content: space-between;
    width: 62px;
    padding: 0 4px 0 5px;
    border-right: 1px solid #bbb;
}

.loop svg {
    width: 8px;
    height: 6px;
}

.play-btn {
    display: flex;
    align-items: center;
    justify-content: center;
    width: 26px;
    height: 15px;
}

.play-btn svg {
    width: 18px;
    height: 12px;
}

.play-btn.on {
    border: 1px solid #ccc;
    background: #fff;
}

.play-btn.wide {
    width: 29px;
    border-left: 1px solid #bbb;
}

.h-scroll {
    display: flex;
    flex: 1;
    justify-content: space-between;
    height: 15px;
    background: #fdfdfa;
}

.grip {
    width: 10px;
    height: 10px;
    align-self: flex-end;
}

.anim-foot .grip {
    margin-left: 7px;
}

.click-spot {
    position: absolute;
    left: 105px;
    bottom: -13px;
    width: 62px;
    height: 62px;
    border-radius: 50%;
    background: #f2e400;
    mix-blend-mode: multiply;
    clip-path: inset(0 0 13px 0);
}

.tooltip {
    position: absolute;
    left: 132px;
    bottom: 0;
    height: 11px;
    padding: 0 2px;
    border: 1px solid #111;
    border-bottom: none;
    background: #ffffe1;
    overflow: hidden;
    white-space: nowrap;
}

.cursor {
    position: absolute;
    left: 130px;
    bottom: 1px;
    width: 14px;
    height: 18px;
}

/* right dock */

.dock {
    display: flex;
    flex-direction: column;
    width: 241px;
    flex-shrink: 0;
    padding: 0 3px 0 2px;
    border-top: 1px solid #444;
    background: #646464;
}

.dock-top {
    display: flex;
    align-items: center;
    gap: 5px;
    height: 17px;
    flex-shrink: 0;
    padding: 0 2px 0 4px;
}

.bars {
    width: 7px;
    height: 11px;
}

.dock-top .last {
    margin-left: auto;
}

.dock-body {
    display: flex;
    flex: 1;
    gap: 2px;
    min-height: 0;
}

.icon-strip {
    display: flex;
    flex-direction: column;
    gap: 2px;
    width: 27px;
}

.strip-group {
    display: flex;
    flex-direction: column;
    align-items: center;
    gap: 3px;
    padding-bottom: 4px;
    border-radius: 3px 3px 0 0;
    background: #e6e6e6;
    overflow: hidden;
}

.strip-group .strip-head {
    width: 100%;
}

.strip-group button {
    width: 22px;
    height: 24px;
    padding: 2px 1px;
    border: 1px solid #c4c4c4;
    border-radius: 3px;
    background: #e2e2e2;
}

.strip-group svg {
    width: 18px;
    height: 18px;
}

.strip-group .char {
    font-size: 16px;
    line-height: 18px;
    color: #222;
    white-space: nowrap;
}

.panels {
    display: flex;
    flex: 1;
    flex-direction: column;
    gap: 3px;
    min-width: 0;
}

.nav-body {
    height: 186px;
    padding: 28px 6px 0 5px;
}

.nav-view {
    height: 130px;
    padding-right: 13px;
    border: 2px solid #e2604c;
    background: white;
    color: #f01c1c;
    font-family: Georgia, "Liberation Serif", serif;
    font-size: 21px;
    font-style: italic;
    line-height: 113px;
    text-align: center;
}

.nav-foot {
    display: flex;
    align-items: flex-start;
    gap: 7px;
    height: 18px;
    padding-left: 1px;
    border-top: 1px solid #bbb;
}

input[type="text"] {
    min-width: 0;
    border: 1px solid #8ea9c9;
    background: white;
    outline: none;
}

.nav-foot input[type="text"] {
    width: 60px;
    height: 14px;
    padding: 0 4px;
}

.nav-foot svg {
    width: 10px;
    height: 7px;
    margin-top: 4px;
}

.nav-foot .far {
    width: 18px;
    height: 9px;
    margin-top: 3px;
}

.nav-foot .grip {
    width: 10px;
    height: 10px;
    margin-left: -2px;
}

/* sliders */

input[type="range"] {
    appearance: none;
    min-width: 0;
    margin: 0;
    background: no-repeat 5px 6px / calc(100% - 10px) 6px;
}

input[type="range"]::-webkit-slider-thumb {
    appearance: none;
    width: 10px;
    height: 8px;
    background: url("data:image/svg+xml,%3Csvg xmlns='http://www.w3.org/2000/svg' viewBox='0 0 10 8'%3E%3Cpath d='M5 1l4 4v2.500H1V5z' fill='%23efe' stroke='%23486848'/%3E%3C/svg%3E") no-repeat;
}

input.zoom-range {
    flex: 1;
    height: 12px;
    margin: 2px 5px 0;
    background-image: linear-gradient(#aaa, #aaa);
    background-position: 0 5px;
    background-size: 100% 2px;
}

input.zoom-range::-webkit-slider-thumb {
    height: 11px;
    background: url("data:image/svg+xml,%3Csvg xmlns='http://www.w3.org/2000/svg' viewBox='0 0 10 11'%3E%3Cpath d='M5 1l4 3.500v6H1v-6z' fill='%23efe' stroke='%23486848'/%3E%3C/svg%3E") no-repeat;
}

.rgb {
    flex: 1;
    height: 20px;
}

input.rgb::-webkit-slider-thumb {
    margin-top: 12px;
}

input.red {
    background-image: linear-gradient(90deg, black, #fe020e);
}

input.green {
    background-image: linear-gradient(90deg, #fe160e, #fe820e 50%, #f8f020);
}

input.blue {
    background-image: linear-gradient(90deg, #fe1200, #fe1880 50%, #f820f8);
}

/* color panel */

.color-body {
    display: flex;
    padding: 6px 15px 0 8px;
}

.color-left {
    width: 34px;
}

.color-pair {
    display: grid;
    grid-template-columns: 11px 8px 10px;
    grid-template-rows: 12px 8px 11px;
    padding-top: 1px;
}

.pair-fg {
    grid-area: 1 / 1 / 3 / 3;
    z-index: 1;
    border: 1px solid #111;
    background: #fe160e;
    outline: 1px solid #777;
}

.pair-bg {
    grid-area: 2 / 2 / 4 / 4;
    border: 1px solid #999;
    background: white;
}

.gamut {
    display: flex;
    align-items: center;
    gap: 3px;
    margin: 16px 0 0 3px;
}

.gamut svg {
    width: 13px;
    height: 13px;
}

.gamut span {
    width: 12px;
    height: 12px;
    flex-shrink: 0;
    border: 1px solid #111;
    background: #f03020;
}

.channels {
    display: flex;
    flex: 1;
    flex-direction: column;
    gap: 4px;
    min-width: 0;
}

.channel {
    display: flex;
    align-items: center;
    height: 19px;
}

.channel label {
    width: 8px;
    margin-bottom: 4px;
}

.channel input[type="text"] {
    width: 32px;
    height: 19px;
    padding: 0 4px;
}

.spectrum {
    display: flex;
    height: 15px;
    margin: 6px 5px 7px 4px;
}

.ramp {
    flex: 1;
    background:
        linear-gradient(rgba(255, 255, 255, 0.7), rgba(255, 255, 255, 0) 50%, rgba(0, 0, 0, 0.6)),
        linear-gradient(90deg, #f04020, #f8e000 16%, #00a040 32%, #00a0f0 48%, #2030a0 64%, #f02090 80%, #f02020);
}

.bw {
    width: 8px;
    background: linear-gradient(white 50%, black 50%);
}

/* layers panel */

.layers {
    flex: 1;
    min-height: 0;
    margin-bottom: 2px;
}

.layer-row {
    display: flex;
    align-items: center;
    height: 26px;
    flex-shrink: 0;
    padding: 0 4px 0 3px;
    border-bottom: 1px solid #bbb;
    color: #999;
}

.layer-row + .layer-row {
    height: 25px;
}

.combo-blend {
    width: 104px;
    margin-right: 3px;
    border-color: #c8c8bc;
    background: #f6f6f6;
}

.combo-blend select:disabled {
    padding-left: 2px;
    color: #999;
    opacity: 1;
}

.combo-blend svg {
    background: #eeeee6;
}

.percent {
    display: flex;
    align-items: center;
    width: 51px;
    height: 18px;
    margin-left: auto;
    border: 1px solid #c8c8bc;
}

.percent input[type="text"] {
    width: 33px;
    padding: 0 4px;
    border: none;
    background: none;
    color: #999;
}

.percent svg {
    width: 14px;
    height: 14px;
}

.unify {
    width: 14px;
    height: 14px;
    margin-left: 3px;
}

.lock-label {
    margin: 0 2px;
}

.gray {
    height: 12px;
    color: #777;
}

.propagate {
    display: flex;
    align-items: center;
    gap: 2px;
    margin-left: auto;
    white-space: nowrap;
}

.propagate input {
    appearance: none;
    width: 12px;
    height: 12px;
    border: 1px solid #c8c8bc;
    background: white url("data:image/svg+xml,%3Csvg xmlns='http://www.w3.org/2000/svg' viewBox='0 0 10 10'%3E%3Cpath d='M2 5l2 2 4-5' fill='none' stroke='%23aaa' stroke-width='1.600'/%3E%3C/svg%3E") no-repeat;
}

.fill-label {
    margin-left: auto;
}

.fill-label + .percent {
    margin-left: 3px;
}

.layer-area {
    display: flex;
    flex: 1;
    min-height: 0;
    padding: 0 4px 0 1px;
}

.layer-list {
    flex: 1;
}

.layer-list li {
    display: flex;
    align-items: center;
    height: 29px;
    padding-right: 14px;
    border-bottom: 1px solid #bbb;
}

.layer-list .selected {
    background: #dcdcdc;
}

.eye {
    display: flex;
    align-items: center;
    width: 22px;
    height: 100%;
    padding-left: 2px;
    border-right: 1px solid #bbb;
}

.eye svg {
    width: 16px;
    height: 12px;
}

.thumb {
    width: 32px;
    height: 23px;
    margin: 0 7px 0 3px;
    border: 1px solid #111;
    background: white;
    font-family: "Liberation Serif", serif;
    font-size: 15px;
    font-weight: bold;
    line-height: 21px;
    text-align: center;
    color: #333;
}

.selected .thumb {
    outline: 1px dashed #27406f;
}

.bg-lock {
    width: 10px;
    height: 12px;
    margin-left: auto;
}

.list-scroll {
    display: flex;
    flex-direction: column;
    justify-content: space-between;
    width: 14px;
    background: #fdfdfa;
}

.layer-foot {
    display: flex;
    align-items: center;
    justify-content: space-between;
    height: 17px;
    flex-shrink: 0;
    padding: 0 2px 0 7px;
    border-top: 1px solid #bbb;
}

.layer-foot svg {
    width: 18px;
    height: 13px;
}

.layer-foot .grip {
    width: 10px;
    height: 10px;
}

.fx {
    font-family: "Liberation Serif", serif;
    font-size: 15px;
    font-style: italic;
    color: #777;
}
```
